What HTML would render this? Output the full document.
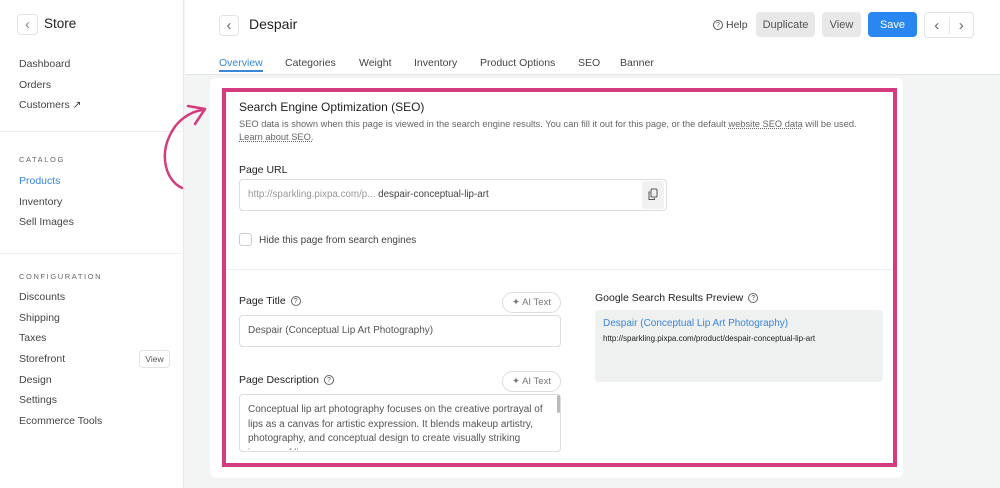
<!DOCTYPE html>
<html><head><style>
*{box-sizing:border-box;margin:0;padding:0}
body{width:1000px;height:488px;overflow:hidden;font-family:"Liberation Sans",sans-serif;color:#333;background:#f3f4f4;position:relative}
.a{position:absolute;white-space:nowrap}
.side{position:absolute;left:0;top:0;width:184px;height:488px;background:#fff;border-right:1px solid #e8e8e8}
.nav{font-size:10.5px;color:#444}
.cap{font-size:7.5px;letter-spacing:1.6px;color:#666}
.btn{position:absolute;border-radius:4px;font-size:11px;display:flex;align-items:center;justify-content:center}
.lbl{font-size:10.5px;color:#222}
.inp{position:absolute;border:1px solid #ddd;border-radius:4px;background:#fff}
.q{display:inline-block;width:10px;height:10px;border:1px solid #666;border-radius:50%;font-size:7px;text-align:center;line-height:9px;color:#555;vertical-align:middle;margin-left:5px}
.ai{position:absolute;border:1px solid #ddd;border-radius:11px;font-size:9.5px;color:#777;display:flex;align-items:center;justify-content:center;background:#fff}
.ch{font-size:15px}
</style></head><body>
<div class="side"></div>
<div class="a" style="left:185px;top:0;width:815px;height:75px;background:#fff;border-bottom:1px solid #e6e6e6"></div>
<div class="btn ch" style="left:17px;top:14px;width:21px;height:21px;border:1px solid #e3e3e3;color:#888">‹</div>
<div class="a" style="left:44px;top:16px;font-size:13.5px;color:#222">Store</div>
<div class="a nav" style="left:19px;top:58px">Dashboard</div>
<div class="a nav" style="left:19px;top:79px">Orders</div>
<div class="a nav" style="left:19px;top:99px">Customers ↗</div>
<div class="a" style="left:0;top:131px;width:184px;border-top:1px solid #eee"></div>
<div class="a cap" style="left:19px;top:155px">CATALOG</div>
<div class="a nav" style="left:19px;top:175px;color:#3a86d8">Products</div>
<div class="a nav" style="left:19px;top:196px">Inventory</div>
<div class="a nav" style="left:19px;top:216px">Sell Images</div>
<div class="a" style="left:0;top:253px;width:184px;border-top:1px solid #eee"></div>
<div class="a cap" style="left:19px;top:272px">CONFIGURATION</div>
<div class="a nav" style="left:19px;top:291px">Discounts</div>
<div class="a nav" style="left:19px;top:312px">Shipping</div>
<div class="a nav" style="left:19px;top:332px">Taxes</div>
<div class="a nav" style="left:19px;top:353px">Storefront</div>
<div class="btn" style="left:139px;top:350px;width:31px;height:18px;border:1px solid #e3e3e3;font-size:8.5px;color:#555">View</div>
<div class="a nav" style="left:19px;top:374px">Design</div>
<div class="a nav" style="left:19px;top:394px">Settings</div>
<div class="a nav" style="left:19px;top:415px">Ecommerce Tools</div>

<div class="btn ch" style="left:219px;top:15px;width:20px;height:21px;border:1px solid #e3e3e3;color:#666">‹</div>
<div class="a" style="left:249px;top:16px;font-size:14px;color:#222">Despair</div>
<div class="a" style="left:713px;top:19px;font-size:10.5px;color:#444"><span class="q" style="margin:0 3px 0 0;border-color:#555">?</span>Help</div>
<div class="btn" style="left:756px;top:12px;width:59px;height:25px;background:#e8e8e8;color:#555">Duplicate</div>
<div class="btn" style="left:822px;top:12px;width:39px;height:25px;background:#e8e8e8;color:#555">View</div>
<div class="btn" style="left:868px;top:12px;width:49px;height:25px;background:#2a86f0;color:#fff">Save</div>
<div class="btn ch" style="left:924px;top:12px;width:50px;height:26px;border:1px solid #e3e3e3;color:#666"><span style="flex:1;text-align:center;border-right:1px solid #e8e8e8">‹</span><span style="flex:1;text-align:center">›</span></div>
<div class="a" style="left:219px;top:57px;font-size:10.5px;color:#3a86d8">Overview</div>
<div class="a" style="left:219px;top:70px;width:44px;height:2px;background:#3a86d8"></div>
<div class="a" style="left:285px;top:57px;font-size:10.5px;color:#444">Categories</div>
<div class="a" style="left:359px;top:57px;font-size:10.5px;color:#444">Weight</div>
<div class="a" style="left:414px;top:57px;font-size:10.5px;color:#444">Inventory</div>
<div class="a" style="left:480px;top:57px;font-size:10.5px;color:#444">Product Options</div>
<div class="a" style="left:578px;top:57px;font-size:10.5px;color:#444">SEO</div>
<div class="a" style="left:620px;top:57px;font-size:10.5px;color:#444">Banner</div>

<div class="a" style="left:210px;top:78px;width:693px;height:400px;background:#fff;border-radius:6px"></div>
<div class="a" style="left:222px;top:88px;width:675px;height:379px;border:4px solid #d43c80"></div>
<svg class="a" style="left:155px;top:100px" width="60" height="95" viewBox="0 0 60 95"><path d="M27 88 C10 80 5 55 15 35 C22 20 35 12 47 10" fill="none" stroke="#d43c80" stroke-width="2.5" stroke-linecap="round"/><path d="M33 6 L50 9 L40 24" fill="none" stroke="#d43c80" stroke-width="2.5" stroke-linecap="round" stroke-linejoin="round"/></svg>

<div class="a" style="left:239px;top:100px;font-size:12px;color:#222">Search Engine Optimization (SEO)</div>
<div class="a" style="left:239px;top:118px;font-size:9.3px;color:#666;line-height:13px">SEO data is shown when this page is viewed in the search engine results. You can fill it out for this page, or the default <u style="text-decoration-style:dotted">website SEO data</u> will be used.<br><u style="text-decoration-style:dotted">Learn about SEO.</u></div>
<div class="a lbl" style="left:239px;top:164px">Page URL</div>
<div class="inp" style="left:239px;top:179px;width:428px;height:32px"></div>
<div class="a" style="left:248px;top:189px;font-size:9.8px;color:#999">http://sparkling.pixpa.com/p... <span style="color:#444">despair-conceptual-lip-art</span></div>
<div class="a" style="left:642px;top:181px;width:22px;height:28px;background:#f2f2f2;border-radius:3px"></div>
<svg class="a" style="left:647px;top:188px" width="12" height="13" viewBox="0 0 12 13"><rect x="4" y="1" width="6" height="8" rx="1" fill="none" stroke="#555"/><path d="M3 4 H2 V11.5 H7.5 V10" fill="none" stroke="#555"/></svg>
<div class="a" style="left:239px;top:233px;width:13px;height:13px;border:1px solid #ccc;border-radius:3px"></div>
<div class="a" style="left:259px;top:235px;font-size:10px;color:#444">Hide this page from search engines</div>
<div class="a" style="left:226px;top:269px;width:667px;border-top:1px solid #eee"></div>

<div class="a lbl" style="left:239px;top:295px">Page Title<span class="q">?</span></div>
<div class="ai" style="left:502px;top:292px;width:59px;height:21px">✦ AI Text</div>
<div class="inp" style="left:239px;top:315px;width:322px;height:32px"></div>
<div class="a" style="left:248px;top:325px;font-size:10px;color:#555">Despair (Conceptual Lip Art Photography)</div>
<div class="a lbl" style="left:239px;top:374px">Page Description<span class="q">?</span></div>
<div class="ai" style="left:502px;top:371px;width:59px;height:21px">✦ AI Text</div>
<div class="inp" style="left:239px;top:394px;width:322px;height:58px;overflow:hidden"></div>
<div class="a" style="left:248px;top:403px;font-size:10px;color:#555;line-height:14.5px;white-space:normal;width:302px;height:47px;overflow:hidden">Conceptual lip art photography focuses on the creative portrayal of lips as a canvas for artistic expression. It blends makeup artistry, photography, and conceptual design to create visually striking images of lips.</div>
<div class="a" style="left:557px;top:395px;width:3px;height:18px;background:#bbb;border-radius:2px"></div>

<div class="a lbl" style="left:595px;top:292px">Google Search Results Preview<span class="q">?</span></div>
<div class="a" style="left:595px;top:310px;width:288px;height:72px;background:#eff0f0;border-radius:4px"></div>
<div class="a" style="left:603px;top:318px;font-size:10px;color:#3a86d8">Despair (Conceptual Lip Art Photography)</div>
<div class="a" style="left:603px;top:334px;font-size:8px;color:#222">http://sparkling.pixpa.com/product/despair-conceptual-lip-art</div>
</body></html>
